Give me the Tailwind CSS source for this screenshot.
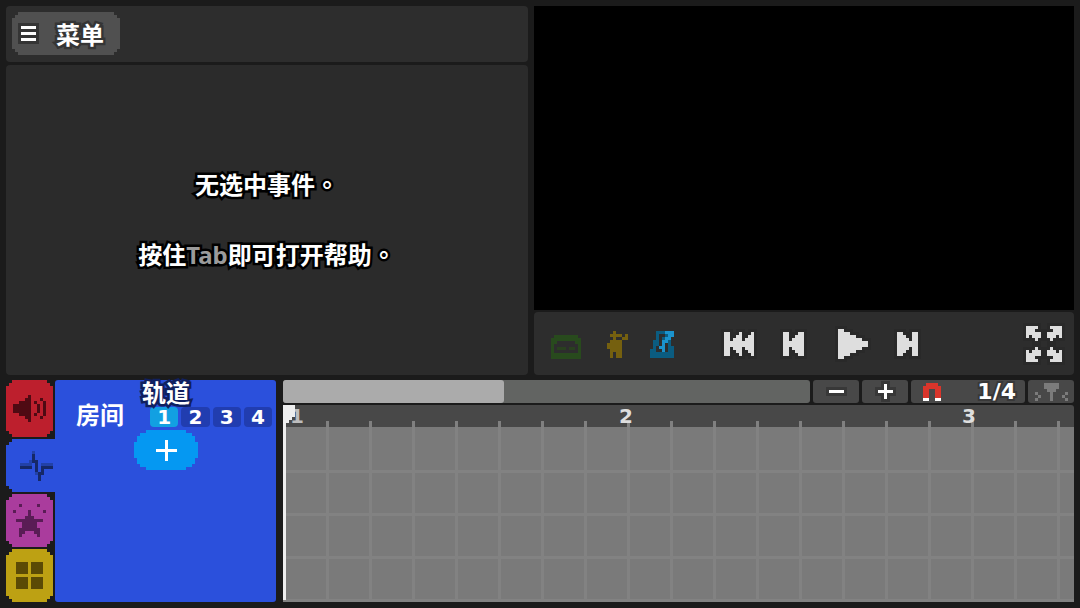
<!DOCTYPE html>
<html lang="zh-CN">

<head>
  <meta charset="UTF-8" />
  <meta name="viewport" content="width=device-width, initial-scale=1.0" />
  <title>关卡编辑器</title>
  <script src="https://cdn.jsdelivr.net/npm/@tailwindcss/browser@4"></script>
</head>

<body class="bg-[#1b1b1b] text-white font-['Noto_Sans_CJK_SC',sans-serif]">
  <div id="app" class="min-h-screen grid grid-rows-[369fr_222fr] gap-[5px] p-[6px]">

    <!-- Inspector + preview -->
    <div class="grid grid-cols-[522fr_540fr] gap-[6px]">
      <div class="flex flex-col gap-[3px]">
        <header class="rounded-[4px] bg-[#2d2d2d] p-[6px] pb-[7px]">
          <button class="flex items-center gap-[20px] h-[43px] pl-[9px] pr-[16px] bg-[#505050] text-[24px] leading-[43px] font-bold [clip-path:polygon(0_6px,3px_6px,3px_3px,6px_3px,6px_0,calc(100%-6px)_0,calc(100%-6px)_3px,calc(100%-3px)_3px,calc(100%-3px)_6px,100%_6px,100%_calc(100%-6px),calc(100%-3px)_calc(100%-6px),calc(100%-3px)_calc(100%-3px),calc(100%-6px)_calc(100%-3px),calc(100%-6px)_100%,6px_100%,6px_calc(100%-3px),3px_calc(100%-3px),3px_calc(100%-6px),0_calc(100%-6px))]">
            <svg data-sprite="menu" data-outline="#353535"></svg>
            <span class="[paint-order:stroke_fill] [-webkit-text-stroke:5px_#353535]">菜单</span>
          </button>
        </header>

        <section lang="zh-TW" class="flex-1 flex flex-col items-center justify-center pb-[2px] rounded-[4px] bg-[#2b2b2b] font-['Noto_Sans_CJK_TC',sans-serif] font-bold text-[24px] leading-[35px] [paint-order:stroke_fill] [-webkit-text-stroke:5px_#000]">
          <p class="mb-[35px]">无选中事件。</p>
          <p>按住<span class="font-['Noto_Sans',sans-serif] text-[#9b9b9b]">Tab</span>即可打开帮助。</p>
        </section>
      </div>

      <div class="flex flex-col gap-[2px]">
        <div class="aspect-video bg-black"></div>

        <!-- Playback controls -->
        <div class="flex-1 flex items-center rounded-[4px] bg-[#2d2d2d] pt-[2px] pl-[8px] pr-[12px] text-[#dedede]">
          <button aria-label="节拍器面板" class="w-[48px] flex justify-center text-[#284a1d]"><svg data-sprite="drum"></svg></button>
          <button aria-label="猫" class="w-[54px] flex justify-center text-[#75600f]"><svg data-sprite="cat"></svg></button>
          <button aria-label="节拍器" class="w-[36px] flex justify-center text-[#0b5c80]"><svg data-sprite="metronome"></svg></button>
          <button aria-label="回到开头" class="ml-[32px] w-[54px] flex justify-center"><svg data-sprite="start" data-outline="#292929"></svg></button>
          <button aria-label="上一小节" class="w-[54px] flex justify-center"><svg data-sprite="prev" data-outline="#292929"></svg></button>
          <button aria-label="播放" class="w-[66px] flex justify-center"><svg data-sprite="play" data-outline="#292929"></svg></button>
          <button aria-label="下一小节" class="w-[42px] flex justify-center"><svg data-sprite="next" data-outline="#292929"></svg></button>
          <button aria-label="全屏" class="ml-auto"><svg data-sprite="fullscreen" data-outline="#292929"></svg></button>
        </div>
      </div>
    </div>

    <!-- Tabs + tracks + timeline -->
    <div class="flex">
      <nav class="w-[49px] grid grid-rows-[57fr_53fr_53fr_53fr] gap-[2px]">
        <button aria-label="声音" class="mr-[2px] flex items-center justify-center bg-[#bd1f2d] text-[#4f0a13] [clip-path:polygon(0_6px,3px_6px,3px_3px,6px_3px,6px_0,calc(100%-6px)_0,calc(100%-6px)_3px,calc(100%-3px)_3px,calc(100%-3px)_6px,100%_6px,100%_calc(100%-6px),calc(100%-3px)_calc(100%-6px),calc(100%-3px)_calc(100%-3px),calc(100%-6px)_calc(100%-3px),calc(100%-6px)_100%,6px_100%,6px_calc(100%-3px),3px_calc(100%-3px),3px_calc(100%-6px),0_calc(100%-6px))]">
          <svg data-sprite="speaker"></svg>
        </button>
        <button aria-label="房间" class="flex items-center justify-center pl-[12px] bg-[#2b50dc] text-[#152868] [clip-path:polygon(0_6px,3px_6px,3px_3px,6px_3px,6px_0,100%_0,100%_100%,6px_100%,6px_calc(100%-3px),3px_calc(100%-3px),3px_calc(100%-6px),0_calc(100%-6px))]">
          <svg data-sprite="pulse"></svg>
        </button>
        <button aria-label="特效" class="mr-[2px] flex items-center justify-center bg-[#aa3c9d] text-[#5a1c55] [clip-path:polygon(0_6px,3px_6px,3px_3px,6px_3px,6px_0,calc(100%-6px)_0,calc(100%-6px)_3px,calc(100%-3px)_3px,calc(100%-3px)_6px,100%_6px,100%_calc(100%-6px),calc(100%-3px)_calc(100%-6px),calc(100%-3px)_calc(100%-3px),calc(100%-6px)_calc(100%-3px),calc(100%-6px)_100%,6px_100%,6px_calc(100%-3px),3px_calc(100%-3px),3px_calc(100%-6px),0_calc(100%-6px))]">
          <svg data-sprite="star"></svg>
        </button>
        <button aria-label="窗口" class="mr-[2px] flex items-center justify-center bg-[#bda113] text-[#5b4a05] [clip-path:polygon(0_6px,3px_6px,3px_3px,6px_3px,6px_0,calc(100%-6px)_0,calc(100%-6px)_3px,calc(100%-3px)_3px,calc(100%-3px)_6px,100%_6px,100%_calc(100%-6px),calc(100%-3px)_calc(100%-6px),calc(100%-3px)_calc(100%-3px),calc(100%-6px)_calc(100%-3px),calc(100%-6px)_100%,6px_100%,6px_calc(100%-3px),3px_calc(100%-3px),3px_calc(100%-6px),0_calc(100%-6px))]">
          <svg data-sprite="windows"></svg>
        </button>
      </nav>

      <section class="w-[221px] flex items-start rounded-[3px] bg-[#2b50dc] font-bold text-[24px]">
        <h2 class="w-[79px] pl-[21px] pt-[20px] leading-[28px] whitespace-nowrap">房间</h2>
        <div class="flex-1 pr-[4px]">
          <h3 class="relative pl-[8px] leading-[24px] [paint-order:stroke_fill] [-webkit-text-stroke:5px_#10205f]">轨道</h3>
          <div class="grid grid-cols-4 gap-[3px] mt-[3px] pl-[16px] font-['DejaVu_Sans',sans-serif] text-[20px] leading-[20px]">
            <button class="rounded-[4px] bg-[#12a0e2]">1</button>
            <button class="rounded-[4px] bg-[#213db0]">2</button>
            <button class="rounded-[4px] bg-[#213db0]">3</button>
            <button class="rounded-[4px] bg-[#213db0]">4</button>
          </div>
          <button aria-label="添加" class="mt-[3px] w-[64px] h-[40px] flex items-center justify-center bg-[#0598f2] [clip-path:polygon(0_12px,3px_12px,3px_6px,6px_6px,6px_3px,12px_3px,12px_0,calc(100%-12px)_0,calc(100%-12px)_3px,calc(100%-6px)_3px,calc(100%-6px)_6px,calc(100%-3px)_6px,calc(100%-3px)_12px,100%_12px,100%_calc(100%-12px),calc(100%-3px)_calc(100%-12px),calc(100%-3px)_calc(100%-6px),calc(100%-6px)_calc(100%-6px),calc(100%-6px)_calc(100%-3px),calc(100%-12px)_calc(100%-3px),calc(100%-12px)_100%,12px_100%,12px_calc(100%-3px),6px_calc(100%-3px),6px_calc(100%-6px),3px_calc(100%-6px),3px_calc(100%-12px),0_calc(100%-12px))]">
            <svg data-sprite="add"></svg>
          </button>
        </div>
      </section>

      <section class="flex-1 ml-[7px] flex flex-col gap-[2px]">
        <div class="flex gap-[3px] h-[23px]">
          <div class="flex-1 rounded-[3px] bg-[#626462]">
            <div class="h-full w-[42%] rounded-[3px] bg-[#ababab]"></div>
          </div>
          <button aria-label="缩小" class="w-[46px] flex items-center justify-center rounded-[3px] bg-[#484848]"><svg data-sprite="minus" data-outline="#383838"></svg></button>
          <button aria-label="放大" class="w-[46px] flex items-center justify-center rounded-[3px] bg-[#484848]"><svg data-sprite="plus" data-outline="#383838"></svg></button>
          <button aria-label="吸附 1/4" class="w-[114px] flex items-center justify-between pl-[12px] pr-[9px] rounded-[3px] bg-[#484848] font-['DejaVu_Sans',sans-serif] font-bold text-[22px] leading-[23px]">
            <svg data-sprite="magnet"></svg>
            <span class="[paint-order:stroke_fill] [-webkit-text-stroke:4px_#383838]">1/4</span>
          </button>
          <button aria-label="筛选" class="w-[46px] flex items-center justify-center rounded-[3px] bg-[#484848] text-[#7b7b7b]"><svg data-sprite="filter"></svg></button>
        </div>

        <div class="relative flex-1 flex flex-col">
          <!-- Bar numbers, one tick per beat -->
          <div class="h-[22px] flex pl-[7px] rounded-tr-[3px] bg-[#484848] [background-image:linear-gradient(90deg,#808080_3px,transparent_3px)] [background-size:43px_6px] bg-repeat-x bg-bottom-left font-['DejaVu_Sans',sans-serif] font-bold text-[20px] leading-[22px] text-[#dedede]">
            <span class="w-[329px] text-[#bdbdbd]">1</span>
            <span class="w-[343px]">2</span>
            <span>3</span>
          </div>
          <!-- One column per beat, one row per track -->
          <div class="flex-1 bg-[#7a7a7a] [background-image:linear-gradient(90deg,#828282_3px,transparent_3px),linear-gradient(#7a7a7a_3px,transparent_3px),linear-gradient(#828282_3px,transparent_3px)] [background-size:43px_43px,100%_100%,43px_43px]"></div>

          <!-- Playhead -->
          <div class="absolute left-0 top-0 bottom-[2px] w-[3px] bg-[#eeeeee]">
            <svg class="block w-[12px] h-[21px] fill-[#eeeeee]" viewBox="0 0 4 7" shape-rendering="crispEdges">
              <path d="M0 0h4v4h-1v1h-1v1h-1v1h-1z" />
            </svg>
          </div>
        </div>
      </section>
    </div>
  </div>

  <script>
    // every cell of a sprite is a 3px square
    const CELL = 3;
    const palette = { '#': 'currentColor', b: '#1b93cd', g: '#29401f', r: '#d9352b', w: '#ffffff', l: '#2241a8' };

    const sprites = {
      menu: ['wwwww', '.....', 'wwwww', '.....', 'wwwww'],
      minus: ['wwwww'],
      plus: ['..w..', '..w..', 'wwwww', '..w..', '..w..'],
      add: ['...w...', '...w...', '...w...', 'wwwwwww', '...w...', '...w...', '...w...'],
      drum: [
        '..........',
        '..........',
        '.########.',
        '##########',
        '##......##',
        '#........#',
        '#.ggg.gg.#',
        '#........#',
        '##########',
        '##########'
      ],
      cat: [
        '..#....',
        '.####.#',
        '..#..##',
        '.####..',
        '#####..',
        '#####..',
        '.####..',
        '.#.##..',
        '.#.##..'
      ],
      metronome: [
        '..###bbb',
        '..#..#bb',
        '..#.#bb.',
        '.##.bb#.',
        '.##.b.#.',
        '.#.bb.##',
        '##..b.##',
        '########',
        '########'
      ],
      start: [
        '##...#...#',
        '##..##..##',
        '##.###.###',
        '##########',
        '##########',
        '##.###.###',
        '##..##..##',
        '##...#...#'
      ],
      prev: ['##...##', '##..###', '##.####', '#######', '#######', '##.####', '##..###', '##...##'],
      next: ['##...##', '###..##', '####.##', '#######', '#######', '####.##', '###..##', '##...##'],
      play: [
        '##........',
        '####......',
        '######....',
        '########..',
        '##########',
        '##########',
        '########..',
        '######....',
        '####......',
        '##........'
      ],
      fullscreen: [
        '####....####',
        '###......###',
        '#####..#####',
        '#.###..###.#',
        '...#....#...',
        '............',
        '............',
        '...#....#...',
        '#.###..###.#',
        '#####..#####',
        '###......###',
        '####....####'
      ],
      speaker: [
        '.....#.....',
        '....##...#.',
        '..####.#..#',
        '######..#.#',
        '######..#.#',
        '######..#.#',
        '..####.#..#',
        '....##...#.',
        '.....#.....'
      ],
      pulse: [
        '....l......',
        '....#......',
        '....#......',
        '...l##.....',
        'llll.#.llll',
        '####.#.####',
        '.....#.#...',
        '.....l##...',
        '......#....',
        '......#....'
      ],
      star: [
        '..#.....#..',
        '...........',
        '#....#....#',
        '.....#.....',
        '....###....',
        '.#########.',
        '...#####...',
        '...#####...',
        '..#######..',
        '..##...##..',
        '..#.....#..'
      ],
      windows: [
        '####.####',
        '####.####',
        '####.####',
        '####.####',
        '.........',
        '####.####',
        '####.####',
        '####.####',
        '####.####'
      ],
      magnet: ['.rrrr.', 'rrrrrr', 'rr..rr', 'rr..rr', 'rr..rr', 'ww..ww'],
      filter: [
        '...#####...',
        '...#####...',
        '....###....',
        '#....#....#',
        '.#...#...#.',
        '#....#....#'
      ]
    };

    document.querySelectorAll('svg[data-sprite]').forEach(svg => {
      const rows = sprites[svg.dataset.sprite];
      const paths = {};
      rows.forEach((row, y) => {
        [...row].forEach((c, x) => {
          if (c !== '.') paths[c] = (paths[c] || '') + `M${x} ${y}h1v1h-1z`;
        });
      });

      svg.setAttribute('viewBox', `0 0 ${rows[0].length} ${rows.length}`);
      svg.setAttribute('width', rows[0].length * CELL);
      svg.setAttribute('height', rows.length * CELL);
      svg.setAttribute('shape-rendering', 'crispEdges');
      svg.setAttribute('overflow', 'visible');
      svg.setAttribute('aria-hidden', 'true');

      let html = '';
      if (svg.dataset.outline) {
        html += `<path d="${Object.values(paths).join('')}" stroke="${svg.dataset.outline}" stroke-width="2" />`;
      }
      for (const c in paths) html += `<path d="${paths[c]}" fill="${palette[c]}" />`;
      svg.innerHTML = html;
    });
  </script>
</body>

</html>
